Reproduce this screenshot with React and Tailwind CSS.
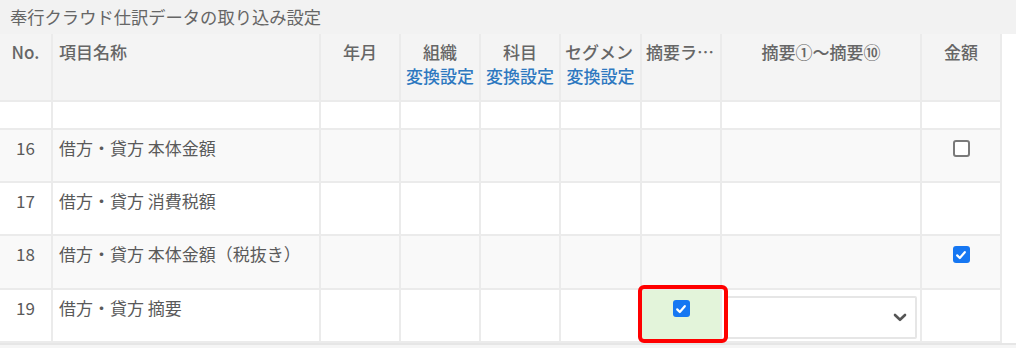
const COLS = "grid grid-cols-[53px_268px_80px_80px_80px_81px_80px_200px_80px] w-[1002px]";

const ROWS = [
  { no: 16, name: "借方・貸方 本体金額", amount: "off", bg: "bg-[#f9f9f9]", h: "h-[53px]" },
  { no: 17, name: "借方・貸方 消費税額", amount: null, bg: "bg-white", h: "h-[53px]" },
  { no: 18, name: "借方・貸方 本体金額（税抜き）", amount: "on", bg: "bg-[#f9f9f9]", h: "h-[54px]" },
  { no: 19, name: "借方・貸方 摘要", amount: null, bg: "bg-white", h: "h-[53px]", summary: true },
];

const cell = "border-r-2 border-b-2 border-[#ebebeb]";

function Checkbox({ checked }) {
  if (checked) {
    return (
      <span className="inline-flex h-[17px] w-[17px] items-center justify-center rounded-[3px] bg-[#1677f2]">
        <svg width="12" height="12" viewBox="0 0 12 12" fill="none">
          <path d="M2.2 6.4 L4.8 9 L9.8 3.2" stroke="white" strokeWidth="2.2" strokeLinecap="round" strokeLinejoin="round" />
        </svg>
      </span>
    );
  }
  return <span className="inline-block h-[17px] w-[17px] rounded-[3px] border-2 border-[#7a7a7a] bg-white" />;
}

function HeaderCell({ children, sub, className = "" }) {
  return (
    <div className={`${cell} overflow-hidden whitespace-nowrap px-1 pt-[6px] text-center leading-[24px] ${className}`}>
      <div className="overflow-hidden">{children}</div>
      {sub && <div className="text-[#2d78c0]">{sub}</div>}
    </div>
  );
}

export default function App() {
  return (
    <div
      className="h-[348px] w-[1016px] overflow-hidden bg-white text-[17px] text-[#5a5a5a]"
      style={{ fontFamily: '"Noto Sans CJK JP", "Noto Sans", sans-serif' }}
    >
      <div className="flex h-[34px] items-center bg-[#f2f2f2] pl-[10px] text-[17.3px] text-[#666]">
        奉行クラウド仕訳データの取り込み設定
      </div>

      <div className={`${COLS} h-[68px] bg-[#f4f4f4] font-medium text-[#666]`}>
        <HeaderCell>No.</HeaderCell>
        <HeaderCell className="!text-left pl-[6px]">項目名称</HeaderCell>
        <HeaderCell>年月</HeaderCell>
        <HeaderCell sub="変換設定">組織</HeaderCell>
        <HeaderCell sub="変換設定">科目</HeaderCell>
        <HeaderCell sub="変換設定">セグメント</HeaderCell>
        <div className={`${cell} px-1 pt-[6px] leading-[24px]`}>
          <div className="truncate">摘要ラベル</div>
        </div>
        <HeaderCell>摘要①～摘要⑩</HeaderCell>
        <HeaderCell>金額</HeaderCell>
      </div>

      <div className={`${COLS} h-[28px] bg-white`}>
        {Array.from({ length: 9 }).map((_, i) => (
          <div key={i} className={cell} />
        ))}
      </div>

      {ROWS.map((row) => (
        <div key={row.no} className={`${COLS} ${row.h} ${row.bg}`}>
          <div className={`${cell} pt-[6px] text-center leading-[24px]`}>{row.no}</div>
          <div className={`${cell} whitespace-nowrap pl-[6px] pt-[6px] leading-[24px]`}>{row.name}</div>
          <div className={cell} />
          <div className={cell} />
          <div className={cell} />
          <div className={cell} />
          <div className={`${cell} relative ${row.summary ? "bg-[#e3f4da]" : ""}`}>
            {row.summary && (
              <>
                <div className="flex justify-center pt-[10px]">
                  <Checkbox checked />
                </div>
                <div className="absolute -left-[4px] -top-[5px] h-[58px] w-[90px] rounded-[6px] border-4 border-[#ff0000]" />
              </>
            )}
          </div>
          <div className={`${cell} px-[3px] pt-[6px]`}>
            {row.summary && (
              <div className="flex h-[43px] items-center justify-end rounded-[2px] border-2 border-[#e6e6e6] bg-white pr-[8px]">
                <svg width="14" height="9" viewBox="0 0 14 9" fill="none">
                  <path d="M2 2 L7 6.8 L12 2" stroke="#555" strokeWidth="2.6" strokeLinecap="round" strokeLinejoin="round" />
                </svg>
              </div>
            )}
          </div>
          <div className={`${cell} flex justify-center pt-[10px]`}>
            {row.amount && <Checkbox checked={row.amount === "on"} />}
          </div>
        </div>
      ))}

      <div className="h-[10px] border-t-2 border-[#e6e6e6] bg-[#f5f5f5]" />
    </div>
  );
}
